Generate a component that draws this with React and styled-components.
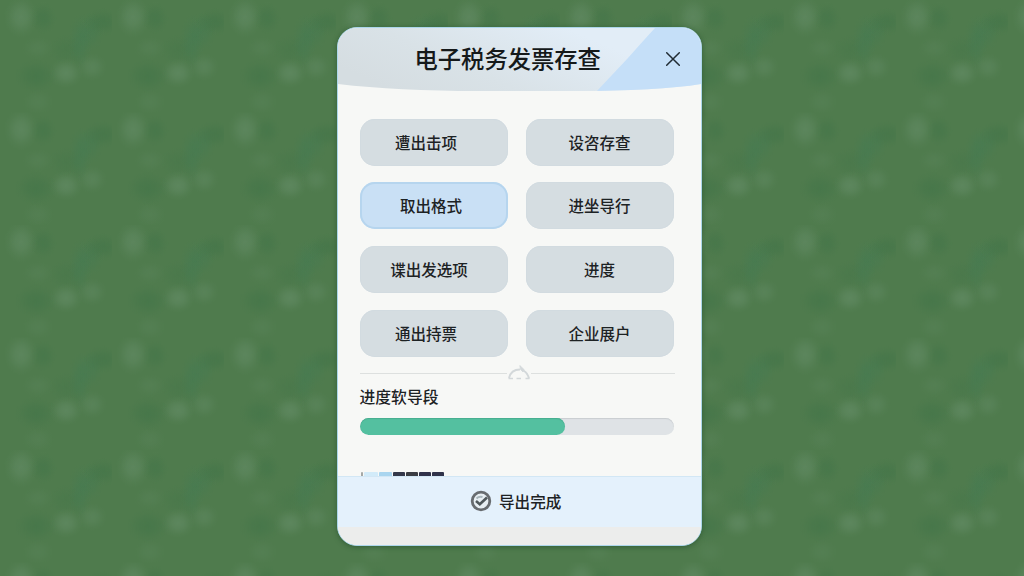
import React from "react";
import styled, { createGlobalStyle } from "styled-components";

const GlobalStyle = createGlobalStyle`
  *, *::before, *::after { box-sizing: border-box; }
  body { margin: 0; }
  button { font: inherit; color: inherit; border: 0; padding: 0; margin: 0; }
`;

const blob = (x, y, w, h, rgb, alpha) =>
  `radial-gradient(ellipse ${w}px ${h}px at ${x}px ${y}px, rgba(${rgb}, ${alpha}) 0%, rgba(${rgb}, ${alpha * 0.75}) 35%, rgba(${rgb}, ${alpha * 0.2}) 75%, rgba(${rgb}, 0) 100%)`;

const LIGHT = "116, 154, 122";
const DARK = "50, 108, 66";
const TEAL = "56, 122, 88";

const Backdrop = styled.main`
  display: flex;
  justify-content: center;
  width: 100%;
  height: 576px;
  padding: 27px 0 30px 14px;
  overflow: hidden;
  font-family: "Noto Sans CJK SC", "Noto Sans", sans-serif;
  color: #1d2224;
  background-color: #4f7b4d;
  background-image: ${[
    blob(21, 17, 17, 21, LIGHT, 0.34),
    blob(66, 73, 17, 15, LIGHT, 0.36),
    blob(92, 67, 15, 14, LIGHT, 0.24),
    blob(38, 48, 16, 12, LIGHT, 0.12),
    blob(38, 102, 16, 13, LIGHT, 0.12),
    blob(36, 76, 22, 17, DARK, 0.26),
    blob(103, 22, 20, 14, DARK, 0.26),
    blob(43, 18, 14, 16, DARK, 0.24),
    blob(80, 42, 12, 28, TEAL, 0.24),
    blob(90, 32, 14, 20, TEAL, 0.2),
    blob(66, 50, 18, 16, DARK, 0.14),
  ].join(", ")};
  background-size: 112px 112.5px;
`;

const Dialog = styled.section`
  display: flex;
  flex-direction: column;
  width: 365px;
  height: 519px;
  border: 1px solid #acd6ea;
  border-radius: 20px;
  overflow: hidden;
  background: #f7f8f6;
  box-shadow: 0 1px 5px rgba(24, 66, 34, 0.5);
`;

const Header = styled.header`
  display: grid;
  grid-template: 64px / 100%;
  flex: none;

  > * { grid-area: 1 / 1; }
`;

const HeaderArt = styled.svg`
  display: block;
  width: 100%;
  height: 64px;
`;

const HeaderRow = styled.div`
  display: flex;
  align-items: center;
  justify-content: space-between;
  padding: 0 20px 3px 77px;
`;

const Title = styled.h1`
  margin: 0;
  padding-bottom: 2px;
  font-size: 23.3px;
  font-weight: 500;
  line-height: 34px;
  white-space: nowrap;
  color: #15191a;
`;

const CloseButton = styled.button`
  display: flex;
  background: none;
`;

const Body = styled.div`
  display: flex;
  flex-direction: column;
  flex: 1;
  min-height: 0;
  padding: 26.6px 26px 0 22px;
`;

const OptionGrid = styled.div`
  display: grid;
  grid-template-columns: 148px 148px;
  grid-auto-rows: 47px;
  gap: 16.8px 18.5px;
`;

const Option = styled.button`
  display: flex;
  align-items: center;
  justify-content: center;
  padding: 0 ${(p) => p.$trail || 1}px 1px 0;
  border-radius: 15px;
  font-size: 15.5px;
  font-weight: 500;
  white-space: nowrap;
  background: ${(p) => (p.$active ? "#c9e0f5" : "#d5dde1")};
  box-shadow: ${(p) =>
    p.$active ? "inset 0 0 0 2px #b6d5ee" : "inset 0 0 0 1px #d2dbe0"};
`;

const Divider = styled.div`
  display: flex;
  align-items: flex-start;
  flex: none;
  height: 20px;
  margin-top: 8px;
`;

const Rule = styled.span`
  flex: ${(p) => p.$grow};
  height: 1px;
  margin-top: 8px;
  background: #dde0df;
`;

const ProgressLabel = styled.div`
  font-size: 15.8px;
  font-weight: 500;
  line-height: 24px;
`;

const Track = styled.div`
  flex: none;
  width: 314.5px;
  height: 17px;
  margin-top: 9px;
  border-radius: 9px;
  overflow: hidden;
  background: #dfe3e6;
  box-shadow: inset 0 1px 1px #c9cdd0;
`;

const Fill = styled.div`
  height: 100%;
  border-radius: 9px;
  background: #54c0a0;
  box-shadow: inset 0 1px 1px #46ad8e;
`;

const Peek = styled.div`
  display: flex;
  gap: 1px;
  height: 4px;
  margin-top: auto;
  padding-left: 1px;
`;

const Segment = styled.span`
  width: ${(p) => p.$w}px;
  background: ${(p) => p.$tone};
  border-radius: 1px 1px 0 0;
`;

const Footer = styled.footer`
  display: flex;
  align-items: center;
  flex: none;
  gap: 7px;
  height: 51px;
  padding: 0 0 2px 132.5px;
  border-top: 1px solid #d2e7f5;
  background: #e4f1fc;
  font-size: 15.6px;
  font-weight: 500;
`;

const Base = styled.div`
  flex: none;
  height: 18px;
  background: #ecedec;
`;

const options = [
  { label: "遭出击项", trail: 15 },
  { label: "设咨存查" },
  { label: "取出格式", trail: 5, active: true },
  { label: "进坐导行" },
  { label: "谍出发选项", trail: 9 },
  { label: "进度" },
  { label: "通出持票", trail: 15 },
  { label: "企业展户" },
];

const segments = [
  [2, "#a5a8a6"],
  [14, "#d2ebf9"],
  [13, "#a9d5ef"],
  [12, "#34384a"],
  [12, "#3b3d43"],
  [12, "#30324a"],
  [12, "#30334a"],
];

export default function App() {
  const progress = 65.2;
  return (
    <>
      <GlobalStyle />
      <Backdrop>
        <Dialog>
          <Header>
            <HeaderArt viewBox="0 0 363 64" preserveAspectRatio="none">
              <defs>
                <linearGradient id="sheen" x1="0" y1="0.6" x2="1" y2="0.2">
                  <stop offset="0" stopColor="#d5dde1" />
                  <stop offset="0.3" stopColor="#d9e2e7" />
                  <stop offset="0.75" stopColor="#e2edf7" />
                </linearGradient>
                <clipPath id="curve">
                  <path d="M0 0H363V56Q320 63 235 63H140Q60 63 0 56Z" />
                </clipPath>
              </defs>
              <g clipPath="url(#curve)">
                <rect width="363" height="64" fill="url(#sheen)" />
                <path d="M317 0Q305 13 290 30Q274 47 258 64H363V0Z" fill="#c5dff8" />
              </g>
            </HeaderArt>
            <HeaderRow>
              <Title>电子税务发票存查</Title>
              <CloseButton aria-label="关闭">
                <svg width="16" height="16" viewBox="0 0 16 16" fill="none" stroke="#202b33" strokeWidth="1.5" strokeLinecap="round">
                  <path d="M1.7 1.7 14.3 14.3M14.3 1.7 1.7 14.3" />
                </svg>
              </CloseButton>
            </HeaderRow>
          </Header>
          <Body>
            <OptionGrid>
              {options.map((o) => (
                <Option key={o.label} $trail={o.trail} $active={o.active}>
                  {o.label}
                </Option>
              ))}
            </OptionGrid>
            <Divider>
              <Rule $grow={148} />
              <svg width="24" height="17" viewBox="0 0 24 17" fill="none" stroke="#d3d8da" strokeWidth="1.9">
                <path d="M2 13Q4 4.500 13 4.500" />
                <path d="M12.800 0.500L17.500 5L16 7L13.500 4.500Z" fill="#d3d8da" strokeWidth="0.800" />
                <path d="M17 6Q20.500 8 22 13.500" />
                <path d="M1.500 13.500H6M9.500 13.500H14M18.500 13.500H22.500" strokeWidth="1.600" />
              </svg>
              <Rule $grow={144} />
            </Divider>
            <ProgressLabel>进度软导段</ProgressLabel>
            <Track>
              <Fill style={{ width: `${progress}%` }} />
            </Track>
            <Peek>
              {segments.map(([w, tone], i) => (
                <Segment key={i} $w={w} $tone={tone} />
              ))}
            </Peek>
          </Body>
          <Footer>
            <svg width="22" height="22" viewBox="0 0 22 22" fill="none">
              <circle cx="11" cy="11" r="8.800" fill="#e8eff3" stroke="#686c70" strokeWidth="2.800" />
              <path d="M6.500 8.500Q9 6 12.500 7" stroke="#a9b6bb" strokeWidth="2" />
              <path d="M6 11L9.800 14.200L17 7.500" stroke="#50585b" strokeWidth="2.600" />
            </svg>
            导出完成
          </Footer>
          <Base />
        </Dialog>
      </Backdrop>
    </>
  );
}
